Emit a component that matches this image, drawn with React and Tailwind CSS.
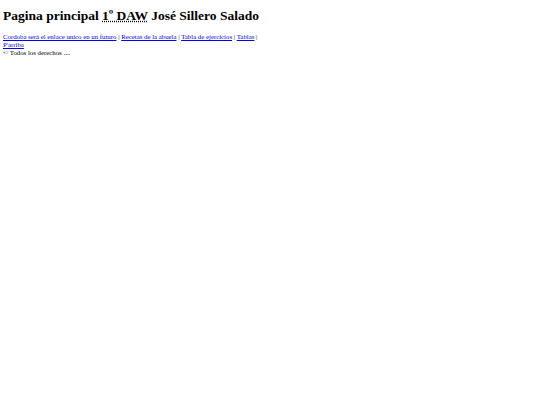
import React from 'react';

export default function App() {
  const links = [
    'Cordoba será el enlace unico en un futuro',
    'Recetas de la abuela',
    'Tabla de ejercicios',
    'Tablas',
  ];

  return (
    <div className="min-h-[405px] bg-white p-[3px] text-black" style={{ fontFamily: '"Liberation Serif", serif' }}>
      <header>
        <h1 className="mt-[5px] mb-[9px] text-[13.5px] leading-[16px] font-bold">
          Pagina principal{' '}
          <abbr title="Primero de Desarrollo de Aplicaciones Web" className="underline decoration-dotted">
            1º DAW
          </abbr>{' '}
          José Sillero Salado
        </h1>
      </header>
      <nav className="text-[6.8px] leading-[7.8px]">
        {links.map((l) => (
          <span key={l}>
            <a href="#" className="text-[#0000ee] underline">
              {l}
            </a>{' '}
            |{' '}
          </span>
        ))}
        <br />
        <a href="#" className="text-[#0000ee] underline">
          P'arriba
        </a>
      </nav>
      <footer className="text-[6.8px] leading-[7.8px]">© Todos los derechos ....</footer>
    </div>
  );
}
